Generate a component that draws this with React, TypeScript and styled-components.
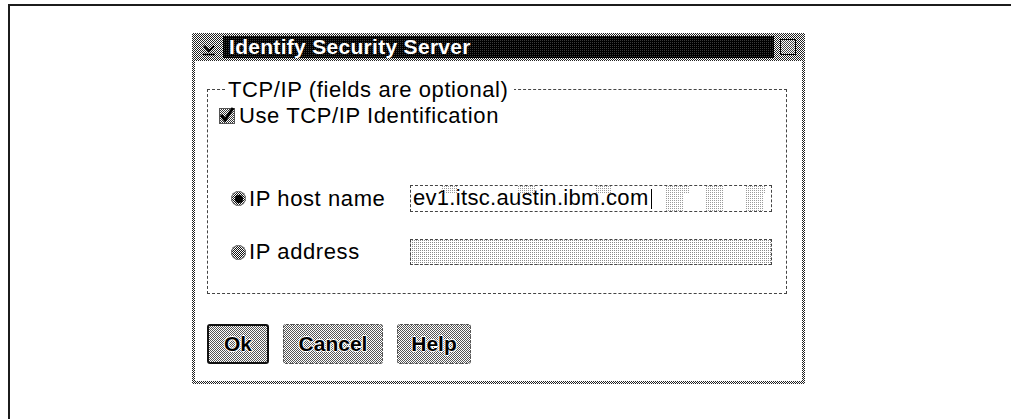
import styled, { createGlobalStyle } from "styled-components";

// 1px dither patterns, the way the old PM desktop shaded its greys
const halftone = (fg: string, bg: string) =>
  `repeating-conic-gradient(${fg} 0 25%, ${bg} 0 50%) 0 0 / 2px 2px`;
const sparse = (fg: string, bg: string) =>
  `repeating-conic-gradient(${fg} 0 25%, ${bg} 0 100%) 0 0 / 2px 2px`;

const GlobalStyle = createGlobalStyle`
  html, body {
    margin: 0;
    background: #fff;
  }
  body {
    font-family: "Liberation Sans", Arial, sans-serif;
    color: #000;
  }
`;

const Page = styled.div`
  width: 1011px;
  height: 419px;
  overflow: hidden;
  box-sizing: border-box;
  padding: 4px 0 0 8px;
`;

const Frame = styled.div`
  height: 100%;
  box-sizing: border-box;
  border-top: 2px solid #1c1c1c;
  border-left: 2px solid #1c1c1c;
  padding: 27px 0 0 182px;
`;

const Dialog = styled.div`
  width: 613px;
  height: 351px;
  box-sizing: border-box;
  padding: 3px;
  background: ${halftone("#222", "#fff")};
  display: flex;
  flex-direction: column;
`;

const TitleBar = styled.div`
  height: 22px;
  display: flex;
  align-items: stretch;
`;

const SysMenu = styled.div`
  width: 28px;
  display: flex;
  align-items: flex-end;
  justify-content: center;
  padding-bottom: 2px;
  box-sizing: border-box;
`;

const Caption = styled.div`
  flex: 1;
  background: ${sparse("#3a3a3a", "#000")};
  color: #fff;
  font-weight: bold;
  font-size: 21px;
  line-height: 22px;
  padding-left: 6px;
  letter-spacing: 0.3px;
  white-space: nowrap;
`;

const MaxBox = styled.div`
  width: 28px;
  display: flex;
  align-items: center;
  justify-content: center;
`;

const MaxSquare = styled.div`
  width: 14px;
  height: 14px;
  border: 1px solid #000;
  background: ${halftone("#444", "#fff")};
`;

const Body = styled.div`
  flex: 1;
  margin-top: 3px;
  background: #fff;
  padding: 16px 15px 0 12px;
  display: flex;
  flex-direction: column;
`;

const Group = styled.fieldset`
  margin: 0;
  padding: 0 14px 28px 11px;
  border: 1px dashed #444;
  font-size: 22px;
  letter-spacing: 0.6px;
`;

const Legend = styled.legend`
  margin-left: 6px;
  padding: 0 5px 0 3px;
  line-height: 25px;
`;

const CheckRow = styled.label`
  display: flex;
  align-items: center;
  gap: 4px;
  height: 24px;
  margin-top: 2px;
`;

const FieldGrid = styled.div`
  margin-top: 57px;
  display: grid;
  grid-template-columns: 191px 1fr;
  row-gap: 27px;
  align-items: center;
`;

const RadioLabel = styled.label`
  display: flex;
  align-items: center;
  gap: 3px;
  padding-left: 12px;
`;

const Radio = styled.span<{ checked?: boolean }>`
  width: 15px;
  height: 15px;
  border-radius: 50%;
  background: ${halftone("#111", "#fff")};
  box-shadow: inset 0 0 0 1px #777;
  display: flex;
  align-items: center;
  justify-content: center;
  &::after {
    content: "";
    width: 8px;
    height: 8px;
    border-radius: 50%;
    background: ${(p) => (p.checked ? "#000" : "transparent")};
  }
`;

const CheckBox = styled.span`
  width: 14px;
  height: 14px;
  position: relative;
  background: ${halftone("#333", "#fff")};
  border: 1px solid #555;
`;

const Field = styled.div<{ disabled?: boolean }>`
  position: relative;
  height: ${(p) => (p.disabled ? 26 : 27)}px;
  box-sizing: border-box;
  border: 1px dashed #444;
  background: ${(p) => (p.disabled ? sparse("#8a8a8a", "#fff") : "#fff")};
  display: flex;
  align-items: flex-end;
  padding: 0 0 2px 2px;
  line-height: 22px;
  letter-spacing: 0.3px;
  white-space: nowrap;
`;

// faint leftover shading in the entry field, top strip and tail blocks
const FieldShade = styled.span<{ tail?: boolean }>`
  position: absolute;
  top: 0;
  left: ${(p) => (p.tail ? "246px" : "0")};
  right: 0;
  height: ${(p) => (p.tail ? "100%" : "8px")};
  background: ${sparse("#9a9a9a", "transparent")};
  mask-image: repeating-linear-gradient(
    90deg,
    transparent 0 ${(p) => (p.tail ? 8 : 30)}px,
    #000 ${(p) => (p.tail ? 8 : 30)}px ${(p) => (p.tail ? 26 : 47)}px,
    transparent ${(p) => (p.tail ? 26 : 47)}px ${(p) => (p.tail ? 40 : 77)}px
  );
  pointer-events: none;
`;

const Caret = styled.span`
  width: 1px;
  height: 20px;
  margin-left: 2px;
  background: #000;
`;

const Buttons = styled.div`
  margin-top: 30px;
  display: flex;
  gap: 14px;
`;

const Button = styled.button<{ isDefault?: boolean; w: number }>`
  width: ${(p) => p.w}px;
  height: 40px;
  font-family: inherit;
  font-size: 21px;
  font-weight: bold;
  color: #000;
  background: ${halftone("#555", "#fff")};
  border: ${(p) => (p.isDefault ? "2px solid #111" : "1px dashed #555")};
  border-radius: 3px;
  padding: 0;
  text-shadow: 1px 0 0 #fff, -1px 0 0 #fff, 0 1px 0 #fff, 0 -1px 0 #fff;
`;

const App = () => {
  return (
    <Page>
      <GlobalStyle />
      <Frame>
        <Dialog>
          <TitleBar>
            <SysMenu>
              <svg width="16" height="12" viewBox="0 0 16 12">
                <path d="M3 2 L8 7 L13 2" stroke="#000" strokeWidth="2" fill="none" />
                <path d="M2 10.5 H14" stroke="#000" strokeWidth="1.5" />
              </svg>
            </SysMenu>
            <Caption>Identify Security Server</Caption>
            <MaxBox>
              <MaxSquare />
            </MaxBox>
          </TitleBar>
          <Body>
            <Group>
              <Legend>TCP/IP (fields are optional)</Legend>
              <CheckRow>
                <CheckBox>
                  <svg
                    width="16"
                    height="16"
                    viewBox="0 0 16 16"
                    style={{ position: "absolute", left: -1, top: -2 }}
                  >
                    <path d="M2 8 L6 13 L14 1" stroke="#000" strokeWidth="3" fill="none" />
                  </svg>
                </CheckBox>
                Use TCP/IP Identification
              </CheckRow>
              <FieldGrid>
                <RadioLabel>
                  <Radio checked />
                  IP host name
                </RadioLabel>
                <Field>
                  <FieldShade />
                  <FieldShade tail />
                  ev1.itsc.austin.ibm.com
                  <Caret />
                </Field>
                <RadioLabel>
                  <Radio />
                  IP address
                </RadioLabel>
                <Field disabled />
              </FieldGrid>
            </Group>
            <Buttons>
              <Button isDefault w={62}>
                Ok
              </Button>
              <Button w={100}>Cancel</Button>
              <Button w={74}>Help</Button>
            </Buttons>
          </Body>
        </Dialog>
      </Frame>
    </Page>
  );
};

export default App;
